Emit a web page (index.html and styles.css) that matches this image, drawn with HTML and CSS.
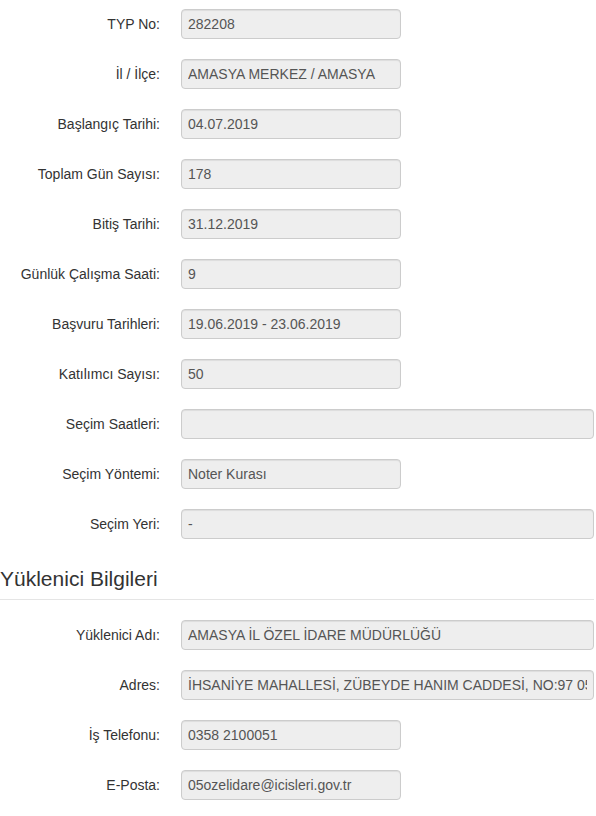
FILE: index.html
```html
<!DOCTYPE html>
<html lang="tr">
<head>
<meta charset="utf-8">
<title>TYP Bilgileri</title>
<link rel="stylesheet" href="styles.css">
</head>
<body>
<div class="page">
  <div class="row"><div class="label">TYP No:</div><div class="field short"><span class="value">282208</span></div></div>
  <div class="row"><div class="label">İl / İlçe:</div><div class="field short"><span class="value">AMASYA MERKEZ / AMASYA</span></div></div>
  <div class="row"><div class="label">Başlangıç Tarihi:</div><div class="field short"><span class="value">04.07.2019</span></div></div>
  <div class="row"><div class="label">Toplam Gün Sayısı:</div><div class="field short"><span class="value">178</span></div></div>
  <div class="row"><div class="label">Bitiş Tarihi:</div><div class="field short"><span class="value">31.12.2019</span></div></div>
  <div class="row"><div class="label">Günlük Çalışma Saati:</div><div class="field short"><span class="value">9</span></div></div>
  <div class="row"><div class="label">Başvuru Tarihleri:</div><div class="field short"><span class="value">19.06.2019 - 23.06.2019</span></div></div>
  <div class="row"><div class="label">Katılımcı Sayısı:</div><div class="field short"><span class="value">50</span></div></div>
  <div class="row"><div class="label">Seçim Saatleri:</div><div class="field long"><span class="value"></span></div></div>
  <div class="row"><div class="label">Seçim Yöntemi:</div><div class="field short"><span class="value">Noter Kurası</span></div></div>
  <div class="row"><div class="label">Seçim Yeri:</div><div class="field long"><span class="value">-</span></div></div>

  <h2 class="legend">Yüklenici Bilgileri</h2>

  <div class="row"><div class="label">Yüklenici Adı:</div><div class="field long"><span class="value">AMASYA İL ÖZEL İDARE MÜDÜRLÜĞÜ</span></div></div>
  <div class="row"><div class="label">Adres:</div><div class="field long"><span class="value">İHSANİYE MAHALLESİ, ZÜBEYDE HANIM CADDESİ, NO:97 05100 MERKEZ/AMASYA</span></div></div>
  <div class="row"><div class="label">İş Telefonu:</div><div class="field short"><span class="value">0358 2100051</span></div></div>
  <div class="row"><div class="label">E-Posta:</div><div class="field short"><span class="value">05ozelidare@icisleri.gov.tr</span></div></div>
</div>
</body>
</html>
```

FILE: styles.css
```css
html, body {
  margin: 0;
  padding: 0;
  background: #fff;
}

body {
  font-family: "Liberation Sans", Arial, sans-serif;
  font-size: 14px;
  line-height: 20px;
  color: #333;
}

.page {
  width: 594px;
  padding-top: 9px;
}

.row {
  display: flex;
  align-items: center;
  gap: 21px;
  margin-bottom: 20px;
}

.label {
  width: 160px;
  flex: none;
  text-align: right;
  color: #333;
}

.field {
  box-sizing: border-box;
  height: 30px;
  padding: 4px 6px;
  border: 1px solid #ccc;
  border-radius: 4px;
  background: #eee;
  color: #555;
  box-shadow: inset 0 1px 1px rgba(0, 0, 0, 0.075);
}

.value {
  display: block;
  height: 20px;
  white-space: nowrap;
  overflow: hidden;
}

.short {
  width: 220px;
}

.long {
  width: 413px;
}

.legend {
  margin: 0 0 20px 0;
  padding: 5px 0;
  font-size: 21px;
  font-weight: normal;
  line-height: 30px;
  color: #333;
  border-bottom: 1px solid #e5e5e5;
}
```
